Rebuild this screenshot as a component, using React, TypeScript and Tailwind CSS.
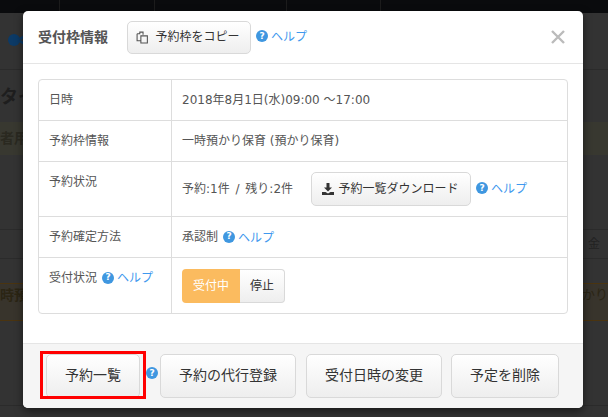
const font = { fontFamily: '"DejaVu Sans", "Noto Sans CJK JP", sans-serif' };

function HelpIcon({ className = '' }: { className?: string }) {
  return (
    <span className={`inline-flex h-3 w-3 shrink-0 items-center justify-center rounded-full bg-[#3f97e0] text-[9px] font-bold leading-none text-white ${className}`}>?</span>
  );
}

function Help() {
  return (
    <span className="inline-flex items-center gap-[3px] text-[12px] text-[#3f99ee]">
      <HelpIcon className="-translate-y-px" />
      <span>ヘルプ</span>
    </span>
  );
}

function Btn({ children, className = '' }: { children: React.ReactNode; className?: string }) {
  return (
    <button className={`inline-flex items-center justify-center rounded-[5px] border border-[#d9d9d9] bg-gradient-to-b from-white to-[#eeeeee] text-[#333] ${className}`}>
      {children}
    </button>
  );
}

function Row({ label, children, className = '' }: { label: React.ReactNode; children: React.ReactNode; className?: string }) {
  return (
    <div className={`flex border-b border-[#ddd] last:border-b-0 ${className}`}>
      <div className="w-[133px] shrink-0 border-r border-[#ddd] px-[10px] py-[11px] leading-[19px]">{label}</div>
      <div className="flex flex-1 items-center px-[10px]">{children}</div>
    </div>
  );
}

// page behind the backdrop, only its edges show
function PageBehind() {
  return (
    <div className="flex h-[417px] flex-col bg-[#333] text-[#232323]">
      <div className="flex h-[13px] shrink-0 bg-[#0a0b0d]">
        <div className="w-[60px] border-r border-[#1c1c1c]" />
        <div className="w-[95px] border-r border-[#1c1c1c]" />
        <div className="w-[132px] border-r border-[#1c1c1c]" />
        <div className="w-[94px] border-r border-[#1c1c1c]" />
      </div>
      <div className="flex h-[57px] shrink-0 items-center border-b border-[#2b2b2b] pl-[8px]">
        <svg width="20" height="16" viewBox="0 0 20 16" fill="#0c3a66" className="translate-y-[-1px]">
          <circle cx="6" cy="8" r="6" />
          <path d="M9 7l9-5v3l-7 4zM9 9l9 5v-3l-7-4z" />
        </svg>
      </div>
      <div className="flex h-[52px] shrink-0 items-center text-[18px] font-bold text-[#1e1e1e]">タイ</div>
      <div className="flex h-[33px] shrink-0 items-center bg-[#383830] text-[14px] font-bold text-[#2a2920]">
        <span>者用</span>
      </div>
      <div className="h-[75px] shrink-0 border-b border-[#2b2b2b]" />
      <div className="flex h-[29px] shrink-0 items-center justify-end border-b border-[#2b2b2b] pr-[8px] text-[12px] text-[#222]">金</div>
      <div className="h-[24px] shrink-0" />
      <div className="flex h-[38px] shrink-0 items-start justify-between border-y border-[#4a3410] bg-[#38342c] pt-[1px] text-[14px] font-bold text-[#2b2514]">
        <span>時預</span>
        <span className="text-[13px] font-normal">かり</span>
      </div>
      <div className="h-[85px] shrink-0 border-b border-[#2b2b2b]" />
    </div>
  );
}

export default function App() {
  return (
    <div className="relative h-[417px] w-[608px] overflow-hidden text-[12px] text-[#555]" style={font}>
      <PageBehind />
      <div className="absolute left-[23px] top-[11px] flex h-[397px] w-[560px] flex-col rounded-[5px] bg-white shadow-[0_3px_9px_rgba(0,0,0,0.5)]">
        <div className="flex h-[53px] items-center border-b border-[#e5e5e5] pl-[15px] pr-[18px]">
          <h4 className="mr-[19px] text-[14px] font-bold">受付枠情報</h4>
          <Btn className="mr-[5px] h-[33px] w-[124px] gap-[6px] pr-[2px]">
            <svg width="13" height="13" viewBox="0 0 12 12" fill="none" stroke="#555" strokeWidth="1">
              <path d="M1 2.5h2.5V1h3v2.5M4.5 4.5h6v6.5h-6zM1 2.5V9h3.5" />
            </svg>
            予約枠をコピー
          </Btn>
          <Help />
          <span className="ml-auto text-[#bbb]">
            <svg width="14" height="14" viewBox="0 0 14 14" stroke="currentColor" strokeWidth="2.4"><path d="M1 1l12 12M13 1L1 13" /></svg>
          </span>
        </div>
        <div className="flex-1 px-[15px] pt-[15px]">
          <div className="overflow-hidden rounded-[4px] border border-[#ddd]">
            <Row label="日時" className="h-[41px]">2018年8月1日(水)09:00 ～17:00</Row>
            <Row label="予約枠情報" className="h-[41px]">一時預かり保育 (預かり保育)</Row>
            <Row label="予約状況" className="h-[55px]">
              <span className="[word-spacing:2px]">予約:1件 / 残り:2件</span>
              <Btn className="ml-[18px] mr-[5px] h-[34px] w-[160px] gap-[5px] pr-[2px]">
                <svg width="12" height="12" viewBox="0 0 12 12" fill="#333"><path d="M4.5 0h3v4.5H10L6 8.5 2 4.5h2.5zM0 9h3.5L6 10.5 8.5 9H12v3H0z" /></svg>
                予約一覧ダウンロード
              </Btn>
              <Help />
            </Row>
            <Row label="予約確定方法" className="h-[41px]">
              承認制
              <span className="ml-[5px]"><Help /></span>
            </Row>
            <Row label={<span className="inline-flex items-center gap-[5px]">受付状況<Help /></span>} className="h-[55px]">
              <div className="flex h-[34px]">
                <span className="flex w-[58px] items-center justify-center rounded-l-[4px] bg-[#fbbb5f] text-white">受付中</span>
                <span className="flex w-[45px] items-center justify-center rounded-r-[4px] border border-l-0 border-[#d9d9d9] bg-gradient-to-b from-white to-[#eeeeee] text-[#333]">停止</span>
              </div>
            </Row>
          </div>
        </div>
        <div className="flex h-[65px] items-center rounded-b-[5px] border-t border-[#e5e5e5] bg-[#f5f5f5] pl-[23px] text-[14px]">
          <Btn className="h-[44px] w-[94px] pb-[2px]">予約一覧</Btn>
          <HelpIcon className="ml-[6px] mr-[2px] -translate-y-[3px]" />
          <Btn className="h-[44px] w-[136px] pb-[2px]">予約の代行登録</Btn>
          <Btn className="ml-[10px] h-[44px] w-[136px] pb-[2px]">受付日時の変更</Btn>
          <Btn className="ml-[9px] h-[44px] w-[108px] pb-[2px]">予定を削除</Btn>
        </div>
      </div>
      <div className="absolute left-[40px] top-[351px] h-[48px] w-[106px] border-[3px] border-[#f00]" />
    </div>
  );
}
